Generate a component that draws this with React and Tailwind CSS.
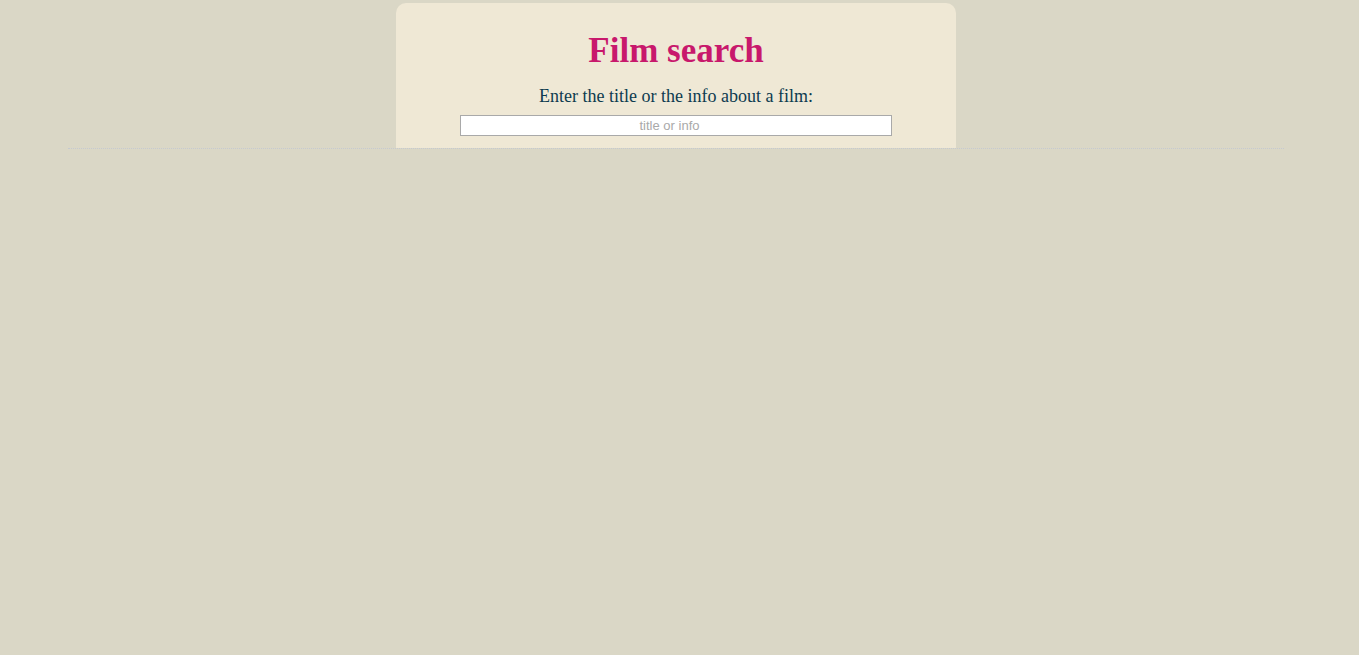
export default function App() {
  return (
    <main className="min-h-screen bg-[#dad7c6] pt-[3px] pr-[75px] pl-[68px]">
      <div className="border-b border-dotted border-[#c5c9d0]">
        <form
          className="mx-auto flex w-full max-w-[560px] flex-col items-center rounded-t-[10px] bg-[#efe8d5] px-16 pt-7 pb-3 font-['Liberation_Serif',serif]"
          onSubmit={(event) => event.preventDefault()}
        >
          <h1 className="text-[35px] leading-10 font-bold text-[#c8186c]">Film search</h1>
          <label htmlFor="film-query" className="mt-[14px] text-lg leading-[22px] text-[#0d3b4f]">
            Enter the title or the info about a film:
          </label>
          <input
            id="film-query"
            type="search"
            placeholder="title or info"
            className="mt-2 h-[21px] w-full border border-[#a9a9a9] bg-white text-center font-['Liberation_Sans',sans-serif] text-[13px] text-black placeholder:text-[#a9a9a9]"
          />
        </form>
      </div>
    </main>
  );
}
